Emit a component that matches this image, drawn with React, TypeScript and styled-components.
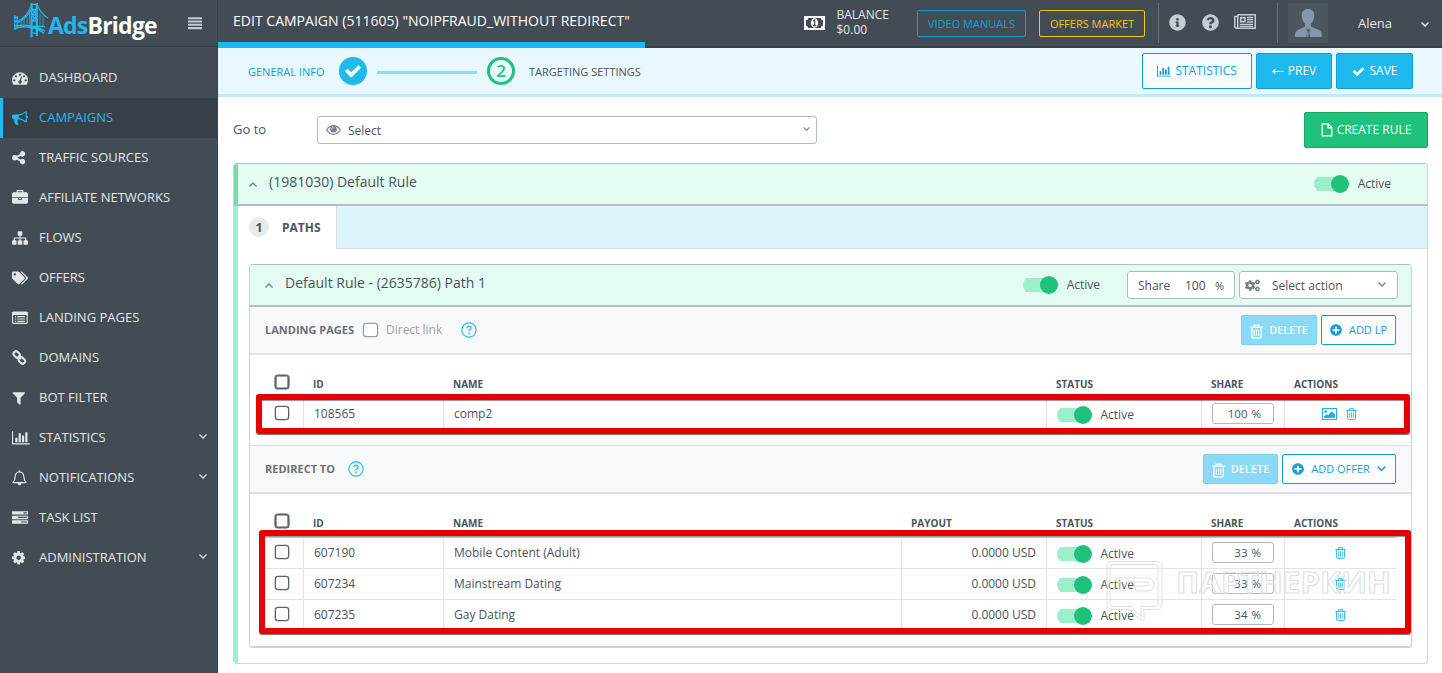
import React from "react";
import styled, { createGlobalStyle, css } from "styled-components";
import { FaTags, FaInfoCircle, FaQuestionCircle, FaPlusCircle, FaCogs } from "react-icons/fa";

const Global = createGlobalStyle`
  *, *::before, *::after { box-sizing: border-box; }
  body { margin: 0; background: #fff; font-family: "Open Sans", sans-serif; font-size: 13px; color: #4a545c; overflow: hidden; }
  svg { display: block; flex: none; }
`;

/* ---------- icons ---------- */

const PATHS = {
  dashboard: "M384 1152q0-53-37.500-90.500t-90.500-37.500-90.500 37.500-37.500 90.500 37.500 90.500 90.500 37.500 90.500-37.500 37.500-90.500zm192-448q0-53-37.500-90.500t-90.500-37.500-90.500 37.500-37.500 90.500 37.500 90.500 90.500 37.500 90.500-37.500 37.500-90.500zm428 481l101-382q6-26-7.500-48.500t-38.500-29.500-48 6.500-30 39.500l-101 382q-60 5-107 43.500t-63 98.500q-20 77 20 146t117 89 146-20 89-117q16-60-6-117t-72-91zm660-33q0-53-37.500-90.500t-90.500-37.500-90.500 37.500-37.500 90.500 37.500 90.500 90.500 37.500 90.500-37.500 37.500-90.500zm-640-640q0-53-37.500-90.500t-90.500-37.500-90.500 37.500-37.500 90.500 37.500 90.500 90.500 37.500 90.500-37.500 37.500-90.500zm448 192q0-53-37.500-90.500t-90.500-37.500-90.500 37.500-37.500 90.500 37.500 90.500 90.500 37.500 90.500-37.500 37.500-90.500zm320 448q0 261-141 483-19 29-54 29h-1402q-35 0-54-29-141-221-141-483 0-182 71-348t191-286 286-191 348-71 348 71 286 191 191 286 71 348z",
  bullhorn: "M1664 640q53 0 90.500 37.500t37.500 90.500-37.500 90.500-90.500 37.500v384q0 52-38 90t-90 38q-417-347-812-380-58 19-91 66t-31 100.500 40 92.500q-20 33-23 65.500t6 58 33.500 55 48 50 61.500 50.500q-29 58-111.500 83t-168.500 11.500-132-55.500q-7-23-29.500-87.500t-32-94.500-23-89-15-101 3.500-98.500 22-110.500h-122q-66 0-113-47t-47-113v-192q0-66 47-113t113-47h480q435 0 896-384 52 0 90 38t38 90v384zm-128 604v-954q-394 302-768 343v270q377 42 768 341z",
  share: "M1344 1024q133 0 226.500 93.500t93.500 226.500-93.500 226.500-226.500 93.500-226.500-93.500-93.500-226.500q0-12 2-34l-360-180q-92 86-218 86-133 0-226.500-93.500t-93.500-226.500 93.500-226.500 226.500-93.500q126 0 218 86l360-180q-2-22-2-34 0-133 93.500-226.500t226.500-93.500 226.500 93.500 93.500 226.500-93.500 226.500-226.500 93.500q-126 0-218-86l-360 180q2 22 2 34t-2 34l360 180q92-86 218-86z",
  briefcase: "M640 256h512v-128h-512v128zm1152 640v480q0 66-47 113t-113 47h-1472q-66 0-113-47t-47-113v-480h672v160q0 26 19 45t45 19h320q26 0 45-19t19-45v-160h672zm-768 0v128h-256v-128h256zm768-480v384h-1792v-384q0-66 47-113t113-47h352v-160q0-40 28-68t68-28h576q40 0 68 28t28 68v160h352q66 0 113 47t47 113z",
  sitemap: "M1792 1248v320q0 40-28 68t-68 28h-320q-40 0-68-28t-28-68v-320q0-40 28-68t68-28h96v-192h-512v192h96q40 0 68 28t28 68v320q0 40-28 68t-68 28h-320q-40 0-68-28t-28-68v-320q0-40 28-68t68-28h96v-192h-512v192h96q40 0 68 28t28 68v320q0 40-28 68t-68 28h-320q-40 0-68-28t-28-68v-320q0-40 28-68t68-28h96v-192q0-52 38-90t90-38h512v-192h-96q-40 0-68-28t-28-68v-320q0-40 28-68t68-28h320q40 0 68 28t28 68v320q0 40-28 68t-68 28h-96v192h512q52 0 90 38t38 90v192h96q40 0 68 28t28 68z",
  filter: "M1595 295q17 41-14 70l-493 493v742q0 42-39 59-13 5-25 5-27 0-45-19l-256-256q-19-19-19-45v-486l-493-493q-31-29-14-70 17-39 59-39h1280q42 0 59 39z",
  chart: "M640 896v512h-256v-512h256zm384-512v1024h-256v-1024h256zm1024 1152v128h-2048v-1536h128v1408h1920zm-640-896v768h-256v-768h256zm384-384v1152h-256v-1152h256z",
  tasks: "M1024 1408h640v-128h-640v128zm-384-512h1024v-128h-1024v128zm640-512h384v-128h-384v128zm512 832v256q0 26-19 45t-45 19h-1664q-26 0-45-19t-19-45v-256q0-26 19-45t45-19h1664q26 0 45 19t19 45zm0-512v256q0 26-19 45t-45 19h-1664q-26 0-45-19t-19-45v-256q0-26 19-45t45-19h1664q26 0 45 19t19 45zm0-512v256q0 26-19 45t-45 19h-1664q-26 0-45-19t-19-45v-256q0-26 19-45t45-19h1664q26 0 45 19t19 45z",
  cog: "M1152 896q0-106-75-181t-181-75-181 75-75 181 75 181 181 75 181-75 75-181zm512-109v222q0 12-8 23t-20 13l-185 28q-19 54-39 91 35 50 107 138 10 12 10 25t-9 23q-27 37-99 108t-94 71q-12 0-26-9l-138-108q-44 23-91 38-16 136-29 186-7 28-36 28h-222q-14 0-24.500-8.500t-11.500-21.500l-28-184q-49-16-90-37l-141 107q-10 9-25 9-14 0-25-11-126-114-165-168-7-10-7-23 0-12 8-23 15-21 51-66.500t54-70.500q-27-50-41-99l-183-27q-13-2-21-12.500t-8-23.500v-222q0-12 8-23t19-13l186-28q14-46 39-92-40-57-107-138-10-12-10-24 0-10 9-23 26-36 98.500-107.500t94.500-71.500q13 0 26 10l138 107q44-23 91-38 16-136 29-186 7-28 36-28h222q14 0 24.500 8.500t11.500 21.500l28 184q49 16 90 37l142-107q9-9 24-9 13 0 25 10 129 119 165 170 7 8 7 22 0 12-8 23-15 21-51 66.500t-54 70.500q26 50 41 98l183 28q13 2 21 12.500t8 23.500z",
  check: "M1671 566q0 40-28 68l-724 724-136 136q-28 28-68 28t-68-28l-136-136-362-362q-28-28-28-68t28-68l136-136q28-28 68-28t68 28l294 295 656-657q28-28 68-28t68 28l136 136q28 28 28 68z",
};

const Glyph = ({ name, size = 16 }: { name: keyof typeof PATHS; size?: number }) => {
  const narrow = ["share", "filter", "cog"].includes(name);
  const w = name === "chart" ? 2048 : narrow ? 1536 : 1792;
  return (
    <svg width={(size * w) / 1792} height={size} viewBox={`${narrow ? 128 : 0} 0 ${w} 1792`} fill="currentColor">
      <path d={PATHS[name]} />
    </svg>
  );
};

const ListIcon = () => (
  <svg width="16" height="14" viewBox="0 0 16 14" fill="none">
    <rect x="0.6" y="1.1" width="14.6" height="11.3" rx="1" stroke="currentColor" strokeWidth="1.1" />
    <path d="M0 1h15.800v3H0z" fill="currentColor" />
    <path d="M3 5.700h1.200M5.300 5.700h7.700M3 8h1.200M5.300 8h7.700M3 10.300h1.200M5.300 10.300h7.700" stroke="currentColor" strokeWidth="1.200" />
  </svg>
);

const ChainIcon = () => (
  <svg width="15" height="15" viewBox="0 0 15 15" fill="none" stroke="currentColor" strokeWidth="2">
    <rect x="1.300" y="2" width="6.800" height="5" rx="2.300" transform="rotate(45 4.700 4.500)" />
    <rect x="6.500" y="8" width="6.800" height="5" rx="2.300" transform="rotate(45 9.900 10.500)" />
    <path d="m6 6 3 3" strokeWidth="1.800" />
  </svg>
);

const BellIcon = () => (
  <svg width="15" height="16" viewBox="0 0 15 16" fill="none" stroke="currentColor" strokeWidth="1.200">
    <path d="M7.500 2c2.800 0 4.100 2 4.300 4.500.2 2.800.8 4.600 2.300 6.100H.9c1.500-1.500 2.100-3.300 2.300-6.100C3.400 4 4.700 2 7.500 2z" strokeLinejoin="round" />
    <path d="M7.500.4V2" strokeWidth="1.600" />
    <path d="M5.500 13h4q0 2.300-2 2.300t-2-2.300z" fill="currentColor" stroke="none" />
  </svg>
);

const EyeIcon = () => (
  <svg width="15" height="12" viewBox="0 0 15 12" fill="none" stroke="currentColor">
    <path d="M.7 6Q3.300 1.700 7.500 1.700T14.300 6Q11.700 10.300 7.500 10.300T.7 6z" strokeWidth="1.200" />
    <circle cx="7.500" cy="5.300" r="3.300" fill="currentColor" stroke="none" />
    <path d="M5.700 5q.1-1.600 1.800-1.800" stroke="#fff" strokeWidth=".8" />
  </svg>
);

const BurgerIcon = () => (
  <svg width="14" height="13" viewBox="0 0 14 13" stroke="#c3cbd3" strokeWidth="2.100">
    <path d="M0 1.200h14M0 4.500h14M0 7.800h14M0 11.100h14" />
  </svg>
);

const LeftArrow = () => (
  <svg width="12" height="6" viewBox="0 0 12 6" fill="none" stroke="currentColor">
    <path d="M1 3.500h10.500M3.300 1.200 1 3.500l2.300 2" strokeWidth="1.100" />
  </svg>
);

const Chevron = ({ w = 8, up = false, sw = 1.3 }: { w?: number; up?: boolean; sw?: number }) => (
  <svg width={w} height={w * 0.625} viewBox="0 0 8 5" fill="none" stroke="currentColor" strokeWidth={sw}>
    <path d={up ? "M.5 4.500 4 1l3.500 3.500" : "M.5.5 4 4 7.500.5"} />
  </svg>
);

const TrashIcon = ({ w = 12, h = 13, bold = false }: { w?: number; h?: number; bold?: boolean }) => (
  <svg width={w} height={h} viewBox="0 0 12 13" fill="none" stroke="currentColor" strokeWidth={bold ? 1.4 : 1}>
    <path d="M.3 2.600h11.400M3.800 2.500V.7h4.400v1.800M1.700 2.800v8.200q0 1.400 1.400 1.400h5.800q1.400 0 1.400-1.400V2.800" />
    <path d="M4 4.800v5.700M6 4.800v5.700M8 4.800v5.700" strokeWidth={bold ? 1.1 : 0.9} />
  </svg>
);

const PictureIcon = () => (
  <svg width="15" height="12" viewBox="0 0 15 12">
    <rect x=".5" y=".5" width="14" height="11" fill="none" stroke="currentColor" />
    <circle cx="3.600" cy="3.600" r="1.300" fill="currentColor" />
    <path d="M2 10V8.300l2.500-2 1.700 1 3.300-4 3.500 3.300V10z" fill="currentColor" />
  </svg>
);

const HelpIcon = () => (
  <svg width="16" height="16" viewBox="0 0 16 16" fill="none" stroke="#1fb9ee">
    <circle cx="8" cy="8" r="7.100" strokeWidth="1.100" />
    <path d="M5.900 6.200q.1-2 2.100-2t2.100 1.700q0 1-1 1.600T8 9.300" strokeWidth="1.300" />
    <path d="M8 10.600V12" strokeWidth="1.400" />
  </svg>
);

const MoneyIcon = () => (
  <svg width="21" height="14" viewBox="0 0 21 14">
    <rect width="21" height="14" fill="#fff" />
    <path d="M4.200 2h12.600q0 2.300 2.200 2.300v5.400q-2.200 0-2.200 2.300H4.200q0-2.300-2.200-2.300V4.300q2.200 0 2.200-2.300z" fill="#434c54" />
    <ellipse cx="10.500" cy="7" rx="3.600" ry="4.700" fill="#fff" />
    <path d="M9.200 5.300 10.700 4v5.600M9 9.700h3.200" stroke="#434c54" strokeWidth="1.200" fill="none" />
  </svg>
);

const NewsIcon = () => (
  <svg width="22" height="15" viewBox="0 0 22 15" fill="none" stroke="currentColor">
    <path d="M3.700.8h17.500v13.400H2.600Q.7 14.200.7 12.500V2.600h2.500M3.700.8v11.500q0 1.800-1.200 1.800" strokeWidth="1.500" />
    <rect x="6.700" y="3.700" width="4.200" height="4" strokeWidth="1.600" />
    <path d="M13 3.500h6M13 5.700h6M13 8h6M5.800 10.300h13.200M5.800 12.300h13.200" strokeWidth="1.300" />
  </svg>
);

const PersonIcon = () => (
  <svg width="40" height="40" viewBox="0 0 40 40">
    <path d="M20 6c4 0 6.500 2.600 6.300 6.600-.2 3.900-1.700 6.800-3.500 8.200l.4 2.900 7.600 3.300c2.200.8 3 2.600 3 5.200V34H7v-1.800c0-2.600.8-4.400 3-5.200l6.900-3.300.4-2.900c-1.900-1.400-3.400-4.300-3.600-8.200C13.500 8.600 16 6 20 6z" fill="#8597ad" />
    <path d="m18.400 25 1.800 1.700L22 25l-.7 4 .7 5h-3.600l.7-5z" fill="#4b565f" />
    <path d="m19.800 27.200.9 3.300-.4 3.500h-.9l-.3-3.500z" fill="#8597ad" />
  </svg>
);

const FileIcon = () => (
  <svg width="12" height="14" viewBox="0 0 12 14" fill="none" stroke="currentColor" strokeWidth="1.200">
    <path d="M1.200.8h5.900l3.700 3.800v8.200H1.200zM7 1v3.800h3.700" />
  </svg>
);

const BridgeLogo = () => (
  <svg width="37" height="37" viewBox="0 0 37 37" fill="none" stroke="#1fb9ee">
    <path d="M18.600 2v34.500M23.800 2v33" strokeWidth="2.100" />
    <path d="M17.500 3.300h7.500M18 8.500h6M18 14h6M18 20h6M18 31l6 2M19.500 9l4 4.500M23.500 9l-4 4.500M19.500 15l4 4.500M23.500 15l-4 4.500" strokeWidth="1.300" />
    <path d="M18 5Q14 16 4.500 20.500M24.500 4.500Q28 13 35 17M18 9Q12 19 4 22" strokeWidth="1.100" />
    <path d="M1.700 14v15M4.200 15v12M1 16.500h4M1 20.500h4" strokeWidth="1.300" />
    <path d="M1 28Q9 24.500 18 26.500T31 32.500M2 25.500q8-2.500 16-.5t14 5M20 25.500h12" strokeWidth="1.400" />
    <path d="M8 19.500v5M11 17.500v6M14 14.500v9M16.500 10.500v13M27 11.500v14M30 14v11.500" strokeWidth=".7" />
  </svg>
);

/* ---------- shell ---------- */

const Page = styled.div`display: flex; width: 1442px; height: 673px; overflow: hidden; position: relative;`;
const Sidebar = styled.aside`width: 218px; flex: none; background: #434c54; border-right: 1px solid #3a424a;`;
const SideHead = styled.div`height: 47px; border-bottom: 1px solid #363d44; margin-bottom: 11px; padding: 1px 15px 0 13px; display: flex; align-items: flex-start;`;
const Brand = styled.div`
  margin-left: -2px; padding-top: 8px; font-size: 23px; line-height: 32px; font-weight: 700; color: #fff; letter-spacing: -0.78px;
  span { color: #1fb9ee; }
`;
const Burger = styled.div`margin: 16px 0 0 auto;`;
const MenuItem = styled.a<{ $on?: boolean }>`
  display: flex; align-items: center; height: 40px; padding: 0 10px 1px 12px; color: #e3e6e8; font-size: 13px;
  ${(p) => p.$on && css`background: #384047; color: #1fb9ee; box-shadow: inset 3px 0 #1fb9ee;`}
`;
const MenuIcon = styled.span`width: 27px; flex: none;`;
const MenuText = styled.span`flex: 1; padding-bottom: 2px;`;
const MenuArrow = styled.span`margin-top: -3px;`;

const Main = styled.main`flex: 1; min-width: 0;`;
const TopBar = styled.header`height: 48px; background: #434c54; border-bottom: 2px solid #363e46; display: flex; align-items: flex-start; color: #e3e6e8;`;
const TitleBlock = styled.div`
  width: 427px; height: 48px; border-bottom: 6px solid #1fb9ee; padding: 11px 0 0 15px; font-size: 14px; line-height: 20px; color: #fff; white-space: nowrap; letter-spacing: 0.02px;
`;
const Money = styled.div`margin: 16px 11.500px 0 159px;`;
const Balance = styled.div`width: 80.500px; margin-top: 7px; font-size: 12px; line-height: 15px;`;
const GhostButton = styled.div<{ $c: string; $w: number }>`
  width: ${(p) => p.$w}px; height: 27px; margin: 10px 13px 0 0; border: 1px solid ${(p) => p.$c}; color: ${(p) => p.$c}; border-radius: 2px;
  font-size: 11px; display: flex; align-items: center; justify-content: center; white-space: nowrap;
`;
const Divider = styled.div`width: 1px; height: 40px; margin-top: 3px; background: #68717a;`;
const IconRow = styled.div`display: flex; align-items: center; height: 16px; margin-top: 14px; padding-left: 10px; width: 118px; gap: 15.500px; color: #c6ccd1; svg:last-child { margin-top: -1px; }`;
const Avatar = styled.div`margin: 3px 30px 0 10px; background: #4b565f;`;
const UserName = styled.div`width: 63px; padding-top: 14px; line-height: 18px;`;
const UserArrow = styled.div`margin-top: 22px;`;

const StepBar = styled.div`height: 49px; background: #e9f8ff; border-bottom: 3px solid #bdecfd; display: flex; align-items: center; padding: 0 29px 0 30px; font-size: 11px;`;
const StepLabel = styled.span<{ $active?: boolean }>`color: ${(p) => (p.$active ? "#4a545c" : "#159fd0")}; width: ${(p) => (p.$active ? "auto" : "91px")}; margin-right: ${(p) => (p.$active ? "auto" : "0")}; padding-top: 1px;`;
const StepDot = styled.div<{ $done?: boolean }>`
  width: 28px; height: 28px; border-radius: 50%; display: flex; align-items: center; justify-content: center; font-size: 17px; line-height: 20px; font-weight: 600; flex: none;
  ${(p) => (p.$done ? css`background: #1fb9ee; color: #fff;` : css`border: 3px solid #1fc17b; color: #1fc17b; margin-right: 14px;`)}
`;
const StepLine = styled.div`width: 100px; height: 3px; background: #8edcf5; margin: 2px 10px 0;`;

const Button = styled.button<{ $kind?: "primary" | "line" | "green" | "muted"; $w: number; $h?: number; $gap?: number }>`
  font: inherit; font-size: ${(p) => (p.$h === 30 ? "11px" : "12px")}; width: ${(p) => p.$w}px; height: ${(p) => p.$h ?? 36}px; padding: 0 0 ${(p) => (p.$h === 30 ? 1 : 0)}px; border-radius: 2px;
  display: flex; align-items: center; justify-content: center; gap: ${(p) => p.$gap ?? 4}px; white-space: nowrap;
  svg { position: relative; top: ${(p) => (p.$h === 30 && p.$kind === "muted" ? 1.5 : 0.5)}px; }
  ${(p) => p.$kind === "primary" && css`background: #1fb9ee; color: #fff; border: 1px solid #119fd0;`}
  ${(p) => p.$kind === "line" && css`background: #fff9; color: #159fd8; border: 1px solid #119fd0;`}
  ${(p) => p.$kind === "green" && css`background: #1fc17b; color: #fff; border: 1px solid #19a86a; padding-bottom: 2px;`}
  ${(p) => p.$kind === "muted" && css`background: #8adaf6; color: #eefaff; border: 1px solid #7fcfea; font-weight: 600;`}
`;
const StepActions = styled.div`display: flex; gap: 4px; margin-top: -1px;`;

const Content = styled.div`padding: 15px 14px 0 15px;`;
const GoRow = styled.div`display: flex; align-items: center; height: 36px; margin-bottom: 15px;`;
const GoLabel = styled.span`width: 84px; padding-bottom: 2px;`;
const Select = styled.div<{ $w: number; $gap: number }>`
  width: ${(p) => p.$w}px; height: 28px; background: #fff; border: 1px solid #b0bac5; border-radius: 3px; display: flex; align-items: center; padding: 0 ${(p) => (p.$w > 200 ? 6 : 11)}px 0 ${(p) => (p.$w > 200 ? 8 : 5)}px; font-size: 12px; color: #4a545c;
  > svg:first-child { color: #76818c; margin-right: ${(p) => p.$gap}px; }
  > svg:last-child { margin-left: auto; color: #76818c; margin-top: -1px; }
`;
const Push = styled.div`margin-left: auto;`;

/* ---------- rule panel ---------- */

const Rule = styled.section`height: 501px; border: 1px solid #cfd3d7; border-top-color: #b3bec8; border-radius: 4px; display: flex; overflow: hidden;`;
const Stripe = styled.div`width: 4px; background: linear-gradient(#78dbae 40px, #b3bec8 40px 42px, #9bf0cb 42px); flex: none;`;
const RuleBody = styled.div`flex: 1;`;
const Head = styled.div<{ $h: number; $pad: string }>`
  height: ${(p) => p.$h}px; background: #e4fbf1; border-bottom: 2px solid #b3bec8; display: flex; align-items: center; padding: ${(p) => p.$pad}; color: #76818c;
`;
const HeadTitle = styled.span<{ $gap: number }>`margin: -5px auto 0 ${(p) => p.$gap}px; font-size: 14px; color: #4a545c;`;
const TabStrip = styled.div`height: 43px; background: #dcf5fd; border-bottom: 1px solid #dadde2; display: flex;`;
const Tab = styled.div`width: 99px; height: 43px; background: #fff; border-right: 1px solid #dadde2; display: flex; align-items: center; padding: 0 0 1px 11px; font-weight: 700; font-size: 12px; gap: 13px;`;
const Count = styled.span`width: 20px; height: 20px; border-radius: 50%; background: #e8eaee; display: flex; align-items: center; justify-content: center; font-size: 12.500px;`;

const PathCard = styled.div`margin: 15px 15px 0 11px; height: 384px; border: 1px solid #cdd2d7; border-bottom-width: 2px; border-radius: 4px; border-top-color: #b3bec8; overflow: hidden;`;
const ShareField = styled.div`width: 108px; height: 28px; border: 1px solid #b0bac5; border-radius: 3px; background: #fff; margin: 0 4px 0 27px; display: flex; align-items: center; padding: 0 10px; font-size: 12px; color: #4a545c; span:first-child { width: 47px; } span:last-child { margin-left: auto; font-size: 11px; }`;
const Toggle = styled.span`
  width: 35px; height: 18px; display: flex; align-items: center; justify-content: flex-end; flex: none;
  background: linear-gradient(#9bf0cb, #9bf0cb) left center / 28px 14px no-repeat; border-radius: 9px;
  &::after { content: ""; width: 18px; height: 18px; border-radius: 50%; background: #1fc17b; }
`;
const Status = styled.span`display: flex; align-items: center; gap: 8.500px; font-size: 12px; color: #4a545c; line-height: 16px;`;

const SectionBar = styled.div<{ $top?: boolean }>`
  height: 48px; background: #f8f9fb; border-bottom: 2px solid #dfe1e7; display: flex; align-items: center; padding: 0 15px;
  ${(p) => p.$top && css`box-shadow: 0 -1px #dfe1e4;`}
  > svg { margin-top: -1px; }
`;
const SectionTitle = styled.b<{ $gap?: number }>`font-size: 11px; color: #6c7075; padding-bottom: 2px; margin-right: ${(p) => p.$gap ?? 0}px;`;
const Box = styled.span<{ $heavy?: boolean; $soft?: boolean }>`
  width: ${(p) => (p.$soft ? 15 : 14)}px; height: 14px; display: block; border-radius: 3px; background: #fff; border: 1px solid ${(p) => (p.$soft ? "#979ca3" : "#56616a")};
  box-shadow: 0 0 0 ${(p) => (p.$heavy ? "0.6px #56616a, inset 0 0 0 0.6px #56616a" : p.$soft ? "0.2px #979ca3" : "0.3px #56616a")};
`;
const DirectLink = styled.span`display: flex; align-items: center; gap: 8px; margin: 0 19px 1px 9px; font-size: 12px; color: #9b9fa4; line-height: 15px;`;
const Actions = styled.div`margin-left: auto; display: flex; gap: 4px;`;

const Table = styled.div`padding: 0 15px; height: 91px;`;
const Row = styled.div<{ $head?: boolean; $payout?: boolean; $last?: boolean }>`
  display: grid; grid-template-columns: 38px 140px ${(p) => (p.$payout ? "458px 145px" : "603px")} 155px 83px 112px;
  height: ${(p) => (p.$head ? 44 : 31)}px; border-bottom: 1px solid #e1e3e6; font-size: 12px; color: #4a545c;
  ${(p) => p.$head && css`font-size: 10px; font-weight: 700; border-bottom-color: #c7cbd0;`}
  ${(p) => p.$last && css`border-bottom-color: transparent;`}
`;
const HCell = styled.div`padding: 22px 0 0 10px; line-height: 14px; white-space: nowrap;`;
const HCheck = styled.div`padding: 20px 0 0 10px;`;
const Cell = styled.div<{ $right?: boolean; $status?: boolean }>`
  border-left: 1px solid #e1e3e6; padding: ${(p) => (p.$status ? "1px 10px 0" : "0 10px 2px")}; display: flex; align-items: center; justify-content: ${(p) => (p.$right ? "flex-end" : "flex-start")};
  &:first-child { border-left: 0; padding: 0 0 2px 10px; }
`;
const Percent = styled.span`width: 62px; height: 21px; border: 1px solid #b0bac5; border-radius: 3px; display: flex; align-items: center; justify-content: flex-end; padding: 0 12px 1px 0; margin-top: 1px; font-size: 11.500px; word-spacing: 1px;`;
const RowIcons = styled.span<{ $pair?: boolean }>`display: flex; gap: 9px; align-items: center; justify-content: center; flex: 1; color: #22b1e6; padding: 2px ${(p) => (p.$pair ? 2 : 0)}px 0 0;`;

const Mark = styled.div<{ $x: number; $y: number; $w: number; $h: number }>`
  position: absolute; left: ${(p) => p.$x}px; top: ${(p) => p.$y}px; width: ${(p) => p.$w}px; height: ${(p) => p.$h}px;
  border: 6px solid #e60000; border-radius: 3px; box-shadow: 0 1px 1px rgba(0,0,0,.55), inset 0 1px 1px rgba(0,0,0,.45);
`;
const Watermark = styled.svg`position: absolute; left: 1104px; top: 558px;`;

const menu: { label: string; icon: React.ReactNode; on?: boolean; arrow?: boolean }[] = [
  { label: "DASHBOARD", icon: <Glyph name="dashboard" /> },
  { label: "CAMPAIGNS", icon: <Glyph name="bullhorn" />, on: true },
  { label: "TRAFFIC SOURCES", icon: <Glyph name="share" size={15.5} /> },
  { label: "AFFILIATE NETWORKS", icon: <Glyph name="briefcase" /> },
  { label: "FLOWS", icon: <Glyph name="sitemap" /> },
  { label: "OFFERS", icon: <FaTags size={16} /> },
  { label: "LANDING PAGES", icon: <ListIcon /> },
  { label: "DOMAINS", icon: <ChainIcon /> },
  { label: "BOT FILTER", icon: <Glyph name="filter" /> },
  { label: "STATISTICS", icon: <Glyph name="chart" size={15.5} />, arrow: true },
  { label: "NOTIFICATIONS", icon: <BellIcon />, arrow: true },
  { label: "TASK LIST", icon: <Glyph name="tasks" /> },
  { label: "ADMINISTRATION", icon: <Glyph name="cog" size={15.5} />, arrow: true },
];

const Active = () => <Status><Toggle />Active</Status>;

const offers = [
  ["607190", "Mobile Content (Adult)", "33 %"],
  ["607234", "Mainstream Dating", "33 %"],
  ["607235", "Gay Dating", "34 %"],
];

export default function App() {
  return (
    <Page>
      <Global />
      <Sidebar>
        <SideHead>
          <BridgeLogo />
          <Brand><span>Ads</span>Bridge</Brand>
          <Burger><BurgerIcon /></Burger>
        </SideHead>
        {menu.map((m) => (
          <MenuItem key={m.label} $on={m.on}>
            <MenuIcon>{m.icon}</MenuIcon>
            <MenuText>{m.label}</MenuText>
            {m.arrow && <MenuArrow><Chevron /></MenuArrow>}
          </MenuItem>
        ))}
      </Sidebar>
      <Main>
        <TopBar>
          <TitleBlock>EDIT CAMPAIGN (511605) "NOIPFRAUD_WITHOUT REDIRECT"</TitleBlock>
          <Money><MoneyIcon /></Money>
          <Balance>BALANCE<br />$0.00</Balance>
          <GhostButton $c="#129fd6" $w={109}>VIDEO MANUALS</GhostButton>
          <GhostButton $c="#f5c518" $w={106}>OFFERS MARKET</GhostButton>
          <Divider />
          <IconRow><FaInfoCircle size={17} /><FaQuestionCircle size={17} /><NewsIcon /></IconRow>
          <Divider />
          <Avatar><PersonIcon /></Avatar>
          <UserName>Alena</UserName>
          <UserArrow><Chevron sw={1.5} /></UserArrow>
        </TopBar>
        <StepBar>
          <StepLabel>GENERAL INFO</StepLabel>
          <StepDot $done><Glyph name="check" size={18} /></StepDot>
          <StepLine />
          <StepDot>2</StepDot>
          <StepLabel $active>TARGETING SETTINGS</StepLabel>
          <StepActions>
            <Button $kind="line" $w={110}><Glyph name="chart" size={12.5} />STATISTICS</Button>
            <Button $kind="primary" $w={76}><LeftArrow />PREV</Button>
            <Button $kind="primary" $w={77} $gap={5}><Glyph name="check" size={13} />SAVE</Button>
          </StepActions>
        </StepBar>
        <Content>
          <GoRow>
            <GoLabel>Go to</GoLabel>
            <Select $w={500} $gap={7}><EyeIcon />Select<Chevron w={7} /></Select>
            <Push><Button $kind="green" $w={124}><FileIcon />CREATE RULE</Button></Push>
          </GoRow>
          <Rule>
            <Stripe />
            <RuleBody>
              <Head $h={42} $pad="0 36px 0 11px">
                <Chevron up />
                <HeadTitle $gap={12}>(1981030) Default Rule</HeadTitle>
                <Active />
              </Head>
              <TabStrip><Tab><Count>1</Count>PATHS</Tab></TabStrip>
              <PathCard>
                <Head $h={42} $pad="0 13px 0 15px">
                  <Chevron up />
                  <HeadTitle $gap={12}>Default Rule - (2635786) Path 1</HeadTitle>
                  <Active />
                  <ShareField><span>Share</span><span>100</span><span>%</span></ShareField>
                  <Select $w={159} $gap={12}><FaCogs size={15} />Select action<Chevron /></Select>
                </Head>
                <SectionBar>
                  <SectionTitle>LANDING PAGES</SectionTitle>
                  <DirectLink><Box $soft />Direct link</DirectLink>
                  <HelpIcon />
                  <Actions>
                    <Button $kind="muted" $w={76} $h={30} $gap={6}><TrashIcon w={13} h={15} bold />DELETE</Button>
                    <Button $kind="line" $w={75} $h={30} $gap={7}><FaPlusCircle size={12} />ADD LP</Button>
                  </Actions>
                </SectionBar>
                <Table>
                  <Row $head>
                    <HCheck><Box $heavy /></HCheck>
                    <HCell>ID</HCell><HCell>NAME</HCell><HCell>STATUS</HCell><HCell>SHARE</HCell><HCell>ACTIONS</HCell>
                  </Row>
                  <Row>
                    <Cell><Box /></Cell><Cell>108565</Cell><Cell>comp2</Cell><Cell $status><Active /></Cell>
                    <Cell><Percent>100 %</Percent></Cell>
                    <Cell><RowIcons $pair><PictureIcon /><TrashIcon w={11} h={12} /></RowIcons></Cell>
                  </Row>
                </Table>
                <SectionBar $top>
                  <SectionTitle $gap={13}>REDIRECT TO</SectionTitle>
                  <HelpIcon />
                  <Actions>
                    <Button $kind="muted" $w={75} $h={30} $gap={6}><TrashIcon w={13} h={15} bold />DELETE</Button>
                    <Button $kind="line" $w={114} $h={30} $gap={7}><FaPlusCircle size={12} />ADD OFFER<Chevron w={9} /></Button>
                  </Actions>
                </SectionBar>
                <Table>
                  <Row $head $payout>
                    <HCheck><Box $heavy /></HCheck>
                    <HCell>ID</HCell><HCell>NAME</HCell><HCell>PAYOUT</HCell><HCell>STATUS</HCell><HCell>SHARE</HCell><HCell>ACTIONS</HCell>
                  </Row>
                  {offers.map(([id, name, share], i) => (
                    <Row key={id} $payout $last={i === 2}>
                      <Cell><Box /></Cell><Cell>{id}</Cell><Cell>{name}</Cell><Cell $right>0.0000 USD</Cell><Cell $status><Active /></Cell>
                      <Cell><Percent>{share}</Percent></Cell>
                      <Cell><RowIcons><TrashIcon w={11} h={12} /></RowIcons></Cell>
                    </Row>
                  ))}
                </Table>
              </PathCard>
            </RuleBody>
          </Rule>
        </Content>
      </Main>
      <Mark $x={256} $y={394} $w={1154} $h={40} />
      <Mark $x={259} $y={530} $w={1152} $h={104} />
      <Watermark width="290" height="66" viewBox="0 0 290 66" fill="none" stroke="#dedfe1">
        <path d="M8 3.500h44q6 0 6 5v38q0 5-6 5h-12v11q-3 0-5-2l-10-9H8q-5 0-5-5v-38q0-5 5-5z" />
        <path d="M9 6.500h42q3 0 3 2v38q0 2-3 2H37v10l-10-10H9q-3 0-3-2v-38q0-2 3-2z" />
        <path d="M12 20h30q8 0 8 6.500t-8 6.500h-8q-3 0-3-3v-2h11q3 0 3-1.700T42 24H22v6q0 3-3 3h-3v-9h-4z" />
        <text x="72" y="35" textLength="215" lengthAdjust="spacingAndGlyphs" fontFamily="Open Sans, sans-serif" fontWeight="700" fontSize="28">ПАРТНЕРКИН</text>
      </Watermark>
    </Page>
  );
}
